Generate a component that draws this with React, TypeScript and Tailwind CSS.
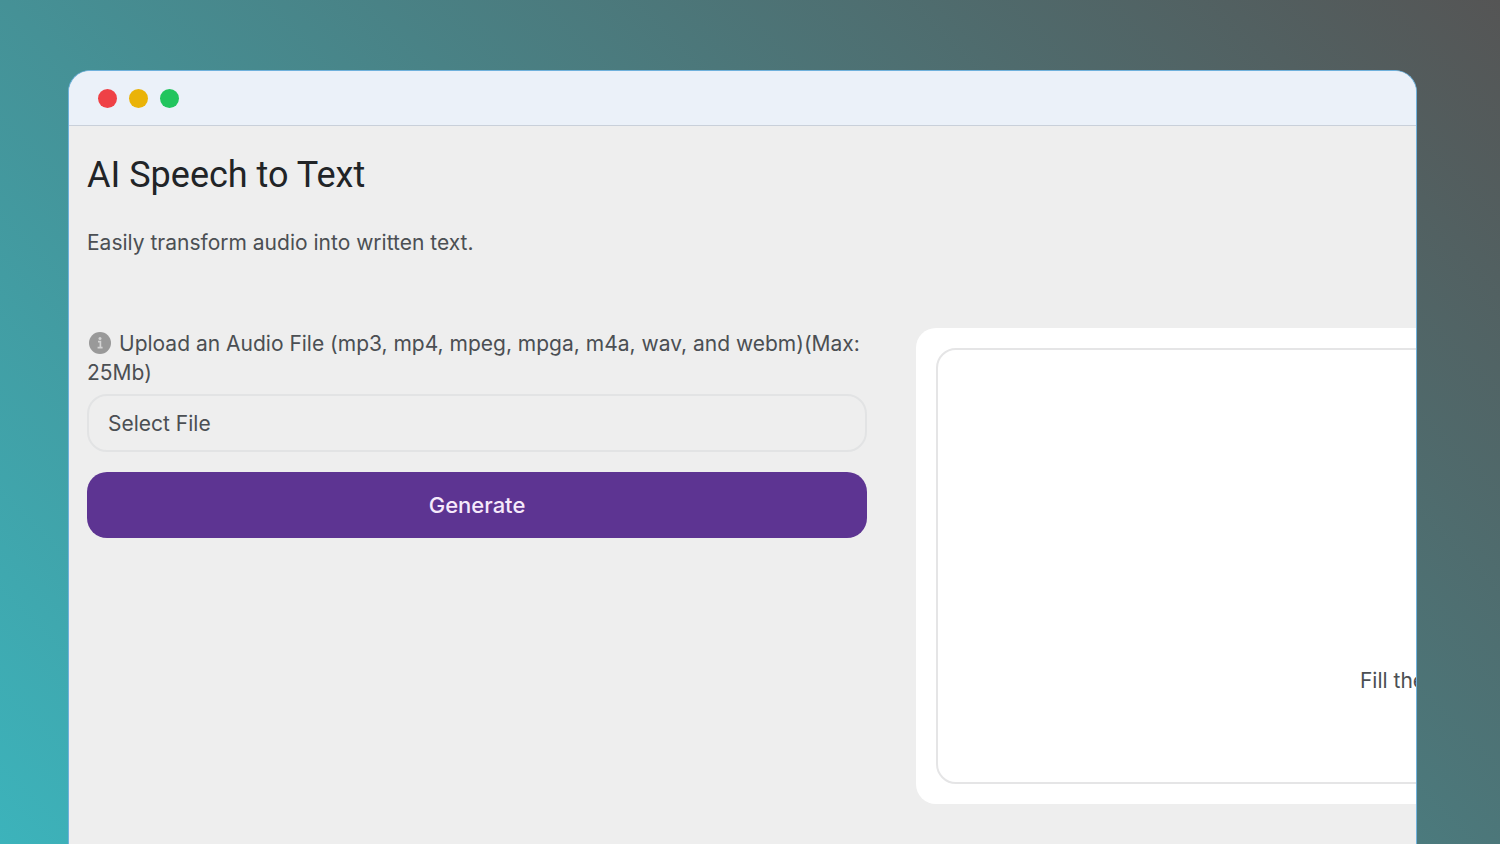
import { useState } from "react";

const dots = ["bg-[#ef4146]", "bg-[#eab308]", "bg-[#22c55e]"];

function InfoIcon() {
  return (
    <svg viewBox="0 0 22 22" className="mr-2 mb-1 ml-0.5 inline-block h-[22px] w-[22px]" aria-hidden="true">
      <circle cx="11" cy="11" r="11" fill="#999999" />
      <circle cx="11" cy="6.4" r="1.5" fill="#d4d4d4" />
      <path d="M9 9.7h2.4v5.8M8.6 15.7h5" fill="none" stroke="#d4d4d4" strokeWidth="1.7" />
    </svg>
  );
}

function UploadForm() {
  const [fileName, setFileName] = useState("");

  return (
    <form className="w-[59.5%] shrink-0 pt-px" onSubmit={(e) => e.preventDefault()}>
      <label htmlFor="audio" className="block text-[21px] leading-[29px]">
        <InfoIcon />
        Upload an Audio File (mp3, mp4, mpeg, mpga, m4a, wav, and webm)(Max: 25Mb)
      </label>
      <label
        htmlFor="audio"
        className="mt-[7px] flex h-[58px] cursor-pointer items-center rounded-[20px] border-2 border-[#e2e3e4] px-[19px] text-[21px]"
      >
        {fileName || "Select File"}
        <input
          id="audio"
          type="file"
          accept="audio/*"
          className="sr-only"
          onChange={(e) => setFileName(e.target.files?.[0]?.name ?? "")}
        />
      </label>
      <button
        type="submit"
        className="mt-5 h-[66px] w-full rounded-[20px] bg-[#5d3492] text-[22px] font-medium text-[#f6e9fb]"
      >
        Generate
      </button>
    </form>
  );
}

function ResultPanel() {
  return (
    <section className="-mr-[471px] flex-1 rounded-[20px] bg-white p-5">
      <div className="flex h-[436px] flex-col items-center justify-end rounded-[20px] border-2 border-[#e5e5e6] pb-[87px]">
        <p className="text-[21px] leading-[29px]">Fill the</p>
      </div>
    </section>
  );
}

export default function App() {
  return (
    <div className="flex h-screen flex-col overflow-hidden bg-[linear-gradient(45deg,#3cb3bb,#555555)] pt-[70px] pr-[83px] pl-[68px] font-['Inter','Liberation_Sans',sans-serif] text-[#4b4f53]">
      <div className="flex flex-1 flex-col overflow-hidden rounded-t-[22px] border border-b-0 border-[#6fb1dc] bg-[#eeeeee]">
        <header className="flex h-[55px] shrink-0 items-center gap-3 border-b border-[#c9d0da] bg-[#ebf1f9] px-[29px]">
          {dots.map((color) => (
            <span key={color} className={`h-[19px] w-[19px] rounded-full ${color}`} />
          ))}
        </header>
        <main className="px-[18px] pt-6">
          <h1 className="font-['Roboto','Liberation_Sans',sans-serif] text-[36px] leading-[50px] text-[#212427]">
            AI Speech to Text
          </h1>
          <p className="mt-7 text-[21px] leading-[29px]">Easily transform audio into written text.</p>
          <div className="mt-[71px] flex items-start gap-[49px]">
            <UploadForm />
            <ResultPanel />
          </div>
        </main>
      </div>
    </div>
  );
}
